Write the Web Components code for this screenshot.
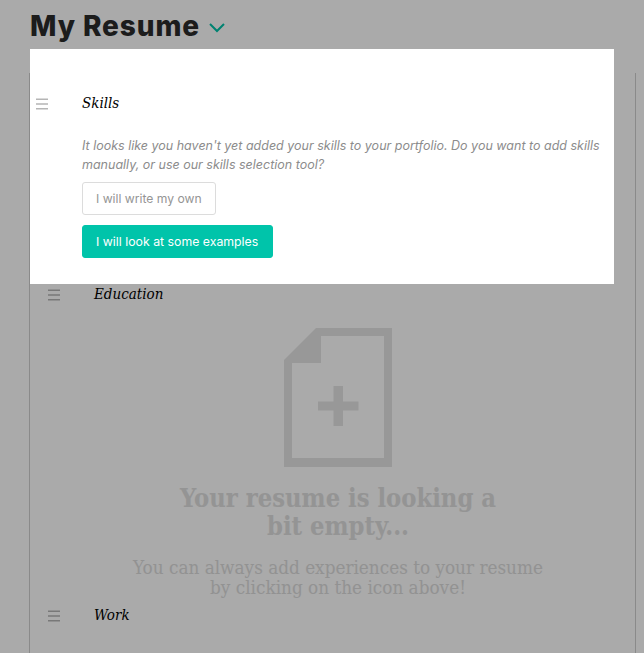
<!DOCTYPE html>
<html>
<head>
<meta charset="utf-8">
<title>My Resume</title>
<style>
  html, body { margin: 0; padding: 0; height: 100%; overflow: hidden; background: #fff; }
</style>
</head>
<body>
<resume-app></resume-app>
<script>
const SERIF = `"DejaVu Serif", "Liberation Serif", serif`;
const SANS = `Inter, "Liberation Sans", sans-serif`;

class DragHandle extends HTMLElement {
  constructor() {
    super();
    this.attachShadow({ mode: 'open' });
    this.shadowRoot.innerHTML = `
      <style>
        :host { display: block; width: 12px; height: 12px; flex: none; }
        svg { display: block; }
      </style>
      <svg width="12" height="12" viewBox="0 0 12 12" fill="#b5b5b5">
        <rect y="0.5" width="12" height="1.5"/>
        <rect y="5.25" width="12" height="1.5"/>
        <rect y="10" width="12" height="1.5"/>
      </svg>`;
  }
}

class SectionHead extends HTMLElement {
  constructor() {
    super();
    this.attachShadow({ mode: 'open' });
    this.shadowRoot.innerHTML = `
      <style>
        :host { display: flex; align-items: center; gap: 34px; height: 20px; }
        .title {
          font: italic 15px/20px ${SERIF};
          font-stretch: condensed;
          color: #000;
          margin-bottom: 3px;
        }
      </style>
      <drag-handle></drag-handle>
      <div class="title"><slot></slot></div>`;
  }
}

class EmptyState extends HTMLElement {
  constructor() {
    super();
    this.attachShadow({ mode: 'open' });
    this.shadowRoot.innerHTML = `
      <style>
        :host { display: flex; flex-direction: column; align-items: center; text-align: center; font-family: ${SERIF}; font-stretch: condensed; }
        svg { display: block; }
        h2 { margin: 17px 0 0; font-size: 25.300px; line-height: 28px; font-weight: 700; color: #dedede; }
        p { margin: 18px 0 0; font-size: 18.750px; line-height: 20px; color: #dcdcdc; }
      </style>
      <svg width="108" height="139" viewBox="0 0 108 139">
        <path fill="#e5e5e5" fill-rule="evenodd" d="M32 0H108V139H0V32ZM37 8V35H8V130H100V8Z"/>
        <path fill="#e5e5e5" d="M49.5 58H59V73.500H74.500V82.500H59V98H49.5V82.500H34V73.500H49.500Z"/>
      </svg>
      <h2>Your resume is looking a<br>bit empty...</h2>
      <p>You can always add experiences to your resume<br>by clicking on the icon above!</p>`;
  }
}

class UiButton extends HTMLElement {
  constructor() {
    super();
    this.attachShadow({ mode: 'open' });
    this.shadowRoot.innerHTML = `
      <style>
        :host { display: inline-block; }
        button {
          display: block;
          box-sizing: border-box;
          height: 33px;
          padding: 0 13px;
          border: 1px solid #dcdcdc;
          border-radius: 3px;
          background: #fff;
          color: #959595;
          font: 12.150px ${SANS};
          cursor: pointer;
        }
        :host([primary]) button { background: #00c4aa; border-color: #00c4aa; color: #fff; font-size: 12.300px; padding: 0 14px 0 13px; }
      </style>
      <button><slot></slot></button>`;
  }
}

class SkillsPrompt extends HTMLElement {
  constructor() {
    super();
    this.attachShadow({ mode: 'open' });
    this.shadowRoot.innerHTML = `
      <style>
        :host {
          position: absolute;
          left: 30px;
          top: 49px;
          width: 584px;
          height: 235px;
          box-sizing: border-box;
          padding: 45px 6px 0;
          background: #fff;
          display: block;
        }
        .body { margin: 22px 0 0 46px; }
        p { margin: 0; font: italic 12.5px/19px ${SANS}; color: #8c8c8c; }
        .actions { margin-top: 8px; display: flex; flex-direction: column; align-items: flex-start; gap: 10px; }
      </style>
      <section-head>Skills</section-head>
      <div class="body">
        <p>It looks like you haven't yet added your skills to your portfolio. Do you want to add skills manually, or use our skills selection tool?</p>
        <div class="actions">
          <ui-button>I will write my own</ui-button>
          <ui-button primary>I will look at some examples</ui-button>
        </div>
      </div>`;
  }
}

class ResumeApp extends HTMLElement {
  constructor() {
    super();
    this.attachShadow({ mode: 'open' });
    this.shadowRoot.innerHTML = `
      <style>
        :host { display: block; position: relative; width: 644px; height: 653px; overflow: hidden; background: #fff; }
        header { height: 49px; padding-left: 30px; box-sizing: border-box; display: flex; align-items: center; gap: 9px; padding-top: 3px; }
        h1 { margin: 0; font: 800 28px/34px ${SANS}; letter-spacing: .9px; color: #2a2a2a; }
        .board {
          box-sizing: border-box;
          margin: 24px 0 0 29px;
          width: 607px;
          height: 700px;
          border-left: 1px solid #cfcfcf;
          border-right: 1px solid #cfcfcf;
          padding: 212px 0 0 18px;
        }
        empty-state { margin: 23px 0 0; width: 580px; }
        .work { margin-top: 8px; }
        .shade { position: absolute; inset: 0; background: rgba(0, 0, 0, .335); }
        header svg { margin-top: 3px; }
      </style>
      <header>
        <h1>My Resume</h1>
        <svg width="16" height="10" viewBox="0 0 16 10" fill="none" stroke="#00c4aa" stroke-width="2"><path d="M1 1l7 7 7-7"/></svg>
      </header>
      <div class="board">
        <section-head>Education</section-head>
        <empty-state></empty-state>
        <section-head class="work">Work</section-head>
      </div>
      <div class="shade"></div>
      <skills-prompt></skills-prompt>`;
  }
}

customElements.define('drag-handle', DragHandle);
customElements.define('section-head', SectionHead);
customElements.define('empty-state', EmptyState);
customElements.define('ui-button', UiButton);
customElements.define('skills-prompt', SkillsPrompt);
customElements.define('resume-app', ResumeApp);
</script>
</body>
</html>
